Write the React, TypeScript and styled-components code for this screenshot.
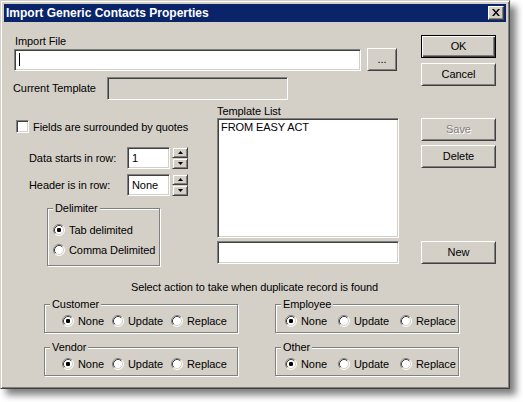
import React from "react";
import styled, { createGlobalStyle } from "styled-components";

const COLORS = {
  face: "#d4d0c8",
  light: "#ffffff",
  shadow: "#808080",
  dark: "#404040",
  title: "#0a246a",
};

const GlobalStyle = createGlobalStyle`
  html, body {
    margin: 0;
    padding: 0;
    background: #ffffff;
  }
  body {
    font-family: "Liberation Sans", Arial, sans-serif;
    font-size: 11px;
    letter-spacing: -0.08px;
    color: #000;
  }
`;

const Screen = styled.div`
  width: 523px;
  height: 402px;
  overflow: hidden;
`;

const Window = styled.div`
  box-sizing: border-box;
  width: 510px;
  height: 389px;
  background: ${COLORS.face};
  border: 1px solid;
  border-color: ${COLORS.face} ${COLORS.dark} ${COLORS.dark} ${COLORS.face};
  box-shadow: inset 1px 1px 0 ${COLORS.light}, inset -1px -1px 0 ${COLORS.shadow},
    6px 6px 7px rgba(0, 0, 0, 0.5);
  padding: 3px;
  display: flex;
  flex-direction: column;
`;

const TitleBar = styled.div`
  height: 18px;
  background: ${COLORS.title};
  display: flex;
  align-items: center;
  padding: 0 2px;
`;

const TitleText = styled.div`
  flex: 1;
  color: #fff;
  font-weight: bold;
  font-size: 12px;
  letter-spacing: 0;
  line-height: 14px;
`;

const CloseButton = styled.div`
  box-sizing: border-box;
  width: 16px;
  height: 14px;
  background: ${COLORS.face};
  border: 1px solid;
  border-color: ${COLORS.light} ${COLORS.dark} ${COLORS.dark} ${COLORS.light};
  box-shadow: inset -1px -1px 0 ${COLORS.shadow};
  display: flex;
  align-items: center;
  justify-content: center;
  padding: 0 1px 1px 0;
`;

const Body = styled.div`
  flex: 1;
  display: flex;
  flex-direction: column;
  padding: 13px 10px 0 9px;
`;

const TopSection = styled.div`
  display: flex;
  justify-content: space-between;
  align-items: flex-start;
`;

const Column = styled.div<{ $gap?: number; $width?: number }>`
  display: flex;
  flex-direction: column;
  gap: ${(p) => p.$gap ?? 0}px;
  ${(p) => (p.$width ? `width: ${p.$width}px;` : "")}
`;

const ButtonColumn = styled.div`
  display: flex;
  flex-direction: column;
  margin-left: auto;
`;

const Label = styled.div<{ $indent?: number }>`
  line-height: 13px;
  height: 13px;
  margin-left: ${(p) => p.$indent ?? 0}px;
  white-space: nowrap;
`;

const Row = styled.div<{ $top?: number; $left?: number; $gap?: number }>`
  display: flex;
  align-items: center;
  margin-top: ${(p) => p.$top ?? 0}px;
  margin-left: ${(p) => p.$left ?? 0}px;
  gap: ${(p) => p.$gap ?? 0}px;
`;

const RowLabel = styled.div<{ $w: number }>`
  width: ${(p) => p.$w}px;
  line-height: 13px;
  white-space: nowrap;
`;

const Field = styled.div<{ $w: number; $h?: number; $disabled?: boolean; $top?: number }>`
  box-sizing: border-box;
  width: ${(p) => p.$w}px;
  height: ${(p) => p.$h ?? 22}px;
  margin-top: ${(p) => p.$top ?? 0}px;
  background: ${(p) => (p.$disabled ? COLORS.face : "#fff")};
  border: 1px solid;
  border-color: ${COLORS.shadow} ${COLORS.light} ${COLORS.light} ${COLORS.shadow};
  box-shadow: inset 1px 1px 0 ${COLORS.dark}, inset -1px -1px 0 ${COLORS.face};
  padding: 0 3px 0 4px;
  display: flex;
  align-items: center;
  line-height: 13px;
`;

const Caret = styled.span`
  width: 1px;
  height: 13px;
  background: #000;
`;

const ListBox = styled.div`
  box-sizing: border-box;
  width: 182px;
  height: 120px;
  background: #fff;
  border: 1px solid;
  border-color: ${COLORS.shadow} ${COLORS.light} ${COLORS.light} ${COLORS.shadow};
  box-shadow: inset 1px 1px 0 ${COLORS.dark}, inset -1px -1px 0 ${COLORS.face};
  padding: 2px 3px;
  line-height: 13px;
`;

const Button = styled.div<{ $default?: boolean; $disabled?: boolean; $w?: number; $top?: number }>`
  box-sizing: border-box;
  width: ${(p) => p.$w ?? 75}px;
  height: 23px;
  margin-top: ${(p) => p.$top ?? 0}px;
  background: ${COLORS.face};
  display: flex;
  align-items: center;
  justify-content: center;
  padding-bottom: 1px;
  line-height: 13px;
  border: 1px solid;
  ${(p) =>
    p.$default
      ? `border-color: #000;
         box-shadow: inset 1px 1px 0 ${COLORS.light}, inset -1px -1px 0 ${COLORS.dark}, inset -2px -2px 0 ${COLORS.shadow};`
      : `border-color: ${COLORS.light} ${COLORS.dark} ${COLORS.dark} ${COLORS.light};
         box-shadow: inset 1px 1px 0 ${COLORS.face}, inset -1px -1px 0 ${COLORS.shadow};`}
  color: ${(p) => (p.$disabled ? COLORS.shadow : "#000")};
  text-shadow: ${(p) => (p.$disabled ? `1px 1px 0 ${COLORS.light}` : "none")};
`;

const Middle = styled.div`
  display: flex;
  align-items: flex-start;
  margin-top: 5px;
`;

const Checkbox = styled.div`
  box-sizing: border-box;
  width: 13px;
  height: 13px;
  background: #fff;
  border: 1px solid;
  border-color: ${COLORS.shadow} ${COLORS.light} ${COLORS.light} ${COLORS.shadow};
  box-shadow: inset 1px 1px 0 ${COLORS.dark}, inset -1px -1px 0 ${COLORS.face};
`;

const Spin = styled.div`
  display: flex;
  flex-direction: column;
  width: 16px;
  height: 22px;
  margin-left: 2px;
`;

const SpinButton = styled.div`
  box-sizing: border-box;
  flex: 1;
  background: ${COLORS.face};
  border: 1px solid;
  border-color: ${COLORS.face} ${COLORS.dark} ${COLORS.dark} ${COLORS.face};
  box-shadow: inset 1px 1px 0 ${COLORS.light}, inset -1px -1px 0 ${COLORS.shadow};
  display: flex;
  align-items: center;
  justify-content: center;
`;

const GroupBox = styled.div<{ $w: number; $h: number; $top?: number; $left?: number }>`
  box-sizing: border-box;
  width: ${(p) => p.$w}px;
  height: ${(p) => p.$h}px;
  margin-top: ${(p) => p.$top ?? 0}px;
  margin-left: ${(p) => p.$left ?? 0}px;
  border: 1px solid ${COLORS.shadow};
  box-shadow: 1px 1px 0 ${COLORS.light}, inset 1px 1px 0 ${COLORS.light};
  display: flex;
  flex-direction: column;
`;

const GroupTitle = styled.div`
  align-self: flex-start;
  margin: -7px 0 0 5px;
  padding: 0 2px;
  background: ${COLORS.face};
  line-height: 13px;
  height: 13px;
`;

const RadioList = styled.div`
  display: flex;
  flex-direction: column;
  gap: 6px;
  margin: 8px 0 0 5px;
`;

const RadioRow = styled.div<{ $left: number; $gap: number }>`
  display: flex;
  align-items: center;
  margin: 3px 0 0 ${(p) => p.$left}px;
  gap: ${(p) => p.$gap}px;
`;

const RadioOption = styled.div`
  display: flex;
  align-items: center;
  gap: 4px;
  height: 14px;
  line-height: 13px;
  white-space: nowrap;
`;

const Caption = styled.div`
  margin-top: 15px;
  text-align: center;
  line-height: 13px;
`;

const GroupGrid = styled.div`
  display: grid;
  grid-template-columns: 194px 184px;
  column-gap: 37px;
  row-gap: 14px;
  margin: 10px 0 0 31px;
`;

const RadioIcon = ({ checked }: { checked?: boolean }) => (
  <svg width="12" height="12" viewBox="0 0 12 12">
    <circle cx="6" cy="6" r="5" fill="#fff" />
    <path d="M2.11 9.89 A5.5 5.5 0 0 1 9.89 2.11" fill="none" stroke={COLORS.shadow} />
    <path d="M9.89 2.11 A5.5 5.5 0 0 1 2.11 9.89" fill="none" stroke={COLORS.light} />
    <path d="M2.82 9.18 A4.5 4.5 0 0 1 9.18 2.82" fill="none" stroke={COLORS.dark} />
    <path d="M9.18 2.82 A4.5 4.5 0 0 1 2.82 9.18" fill="none" stroke={COLORS.face} />
    {checked && <rect x="4" y="4" width="4" height="4" rx="1.2" fill="#000" />}
  </svg>
);

const Arrow = ({ down }: { down?: boolean }) => (
  <svg width="5" height="3" viewBox="0 0 5 3">
    <polygon points={down ? "0,0 5,0 2.5,3" : "2.5,0 5,3 0,3"} fill="#000" />
  </svg>
);

const SpinField = ({ label, value, top }: { label: string; value: string; top: number }) => (
  <Row $top={top} $left={16}>
    <RowLabel $w={98}>{label}</RowLabel>
    <Field $w={43}>{value}</Field>
    <Spin>
      <SpinButton>
        <Arrow />
      </SpinButton>
      <SpinButton>
        <Arrow down />
      </SpinButton>
    </Spin>
  </Row>
);

const dupGroups = [
  { name: "Customer", w: 194, left: 17, gap: 8 },
  { name: "Employee", w: 184, left: 9, gap: 11 },
  { name: "Vendor", w: 194, left: 17, gap: 8 },
  { name: "Other", w: 184, left: 9, gap: 11 },
];

export default function App() {
  return (
    <Screen>
      <GlobalStyle />
      <Window>
        <TitleBar>
          <TitleText>Import Generic Contacts Properties</TitleText>
          <CloseButton>
            <svg width="8" height="7" viewBox="0 0 8 7">
              <path d="M0 0h2l2 2.5L6 0h2L5 3.5 8 7H6L4 4.5 2 7H0l3-3.5z" fill="#000" />
            </svg>
          </CloseButton>
        </TitleBar>
        <Body>
          <TopSection>
            <Column>
              <Label $indent={2}>Import File</Label>
              <Row $left={1} $gap={6}>
                <Field $w={347}>
                  <Caret />
                </Field>
                <Button $w={30}>...</Button>
              </Row>
              <Row $top={6}>
                <RowLabel $w={94}>Current Template</RowLabel>
                <Field $w={181} $h={23} $disabled />
              </Row>
            </Column>
            <Column $gap={5}>
              <Button $default>OK</Button>
              <Button>Cancel</Button>
            </Column>
          </TopSection>

          <Middle>
            <Column $width={204}>
              <Row $top={15} $left={3} $gap={4}>
                <Checkbox />
                <span>Fields are surrounded by quotes</span>
              </Row>
              <SpinField label="Data starts in row:" value="1" top={14} />
              <SpinField label="Header is in row:" value="None" top={5} />
              <GroupBox $w={113} $h={58} $top={12} $left={34}>
                <GroupTitle>Delimiter</GroupTitle>
                <RadioList>
                  <RadioOption>
                    <RadioIcon checked />
                    Tab delimited
                  </RadioOption>
                  <RadioOption>
                    <RadioIcon />
                    Comma Delimited
                  </RadioOption>
                </RadioList>
              </GroupBox>
            </Column>
            <Column $width={182}>
              <Label>Template List</Label>
              <ListBox>FROM EASY ACT</ListBox>
              <Field $w={182} $h={23} $top={3} />
            </Column>
            <ButtonColumn>
              <Button $disabled $top={13}>
                Save
              </Button>
              <Button $top={4}>Delete</Button>
              <Button $top={73}>New</Button>
            </ButtonColumn>
          </Middle>

          <Caption>Select action to take when duplicate record is found</Caption>
          <GroupGrid>
            {dupGroups.map((g) => (
              <GroupBox key={g.name} $w={g.w} $h={29}>
                <GroupTitle>{g.name}</GroupTitle>
                <RadioRow $left={g.left} $gap={g.gap}>
                  <RadioOption>
                    <RadioIcon checked />
                    None
                  </RadioOption>
                  <RadioOption>
                    <RadioIcon />
                    Update
                  </RadioOption>
                  <RadioOption>
                    <RadioIcon />
                    Replace
                  </RadioOption>
                </RadioRow>
              </GroupBox>
            ))}
          </GroupGrid>
        </Body>
      </Window>
    </Screen>
  );
}
